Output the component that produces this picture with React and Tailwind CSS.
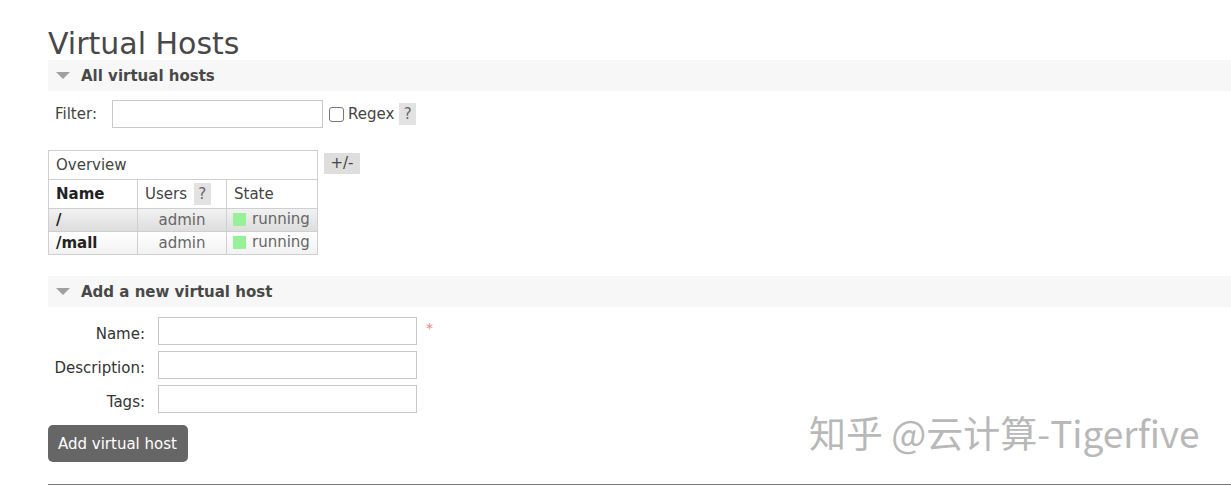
import React from 'react'

const font = { fontFamily: '"DejaVu Sans", Verdana, sans-serif' }

const SectionBar = ({ title }) => (
    <div className="h-[31px] bg-[#f7f7f7] flex items-center">
        <span className="ml-[8px] w-0 h-0 border-l-[7px] border-r-[7px] border-t-[7px] border-l-transparent border-r-transparent border-t-[#a0a0a0]"></span>
        <span className="ml-[11px] mt-[1px] text-[15px] font-bold text-[#484848]">{title}</span>
    </div>
)

const Help = ({ className }) => (
    <span className={`inline-flex items-center justify-center bg-[#e2e2e2] text-[#666] text-[15px] ${className}`}>?</span>
)

const rows = [
    { name: '/', bg: 'bg-gradient-to-b from-[#f2f2f2] to-[#dcdcdc]' },
    { name: '/mall', bg: 'bg-gradient-to-b from-[#ffffff] to-[#f1f1f1]' },
]

const App = () => {
    return (
        <div className="relative w-[1231px] h-[487px] bg-white overflow-hidden text-[#444]" style={font}>
            <div className="pl-[48px] pt-[28px]">
                <h1 className="text-[30px] leading-[32px] text-[#484848]">Virtual Hosts</h1>

                <SectionBar title="All virtual hosts" />

                {/* filter */}
                <div className="mt-[9px] flex items-center h-[28px] text-[15px]">
                    <span className="ml-[7px] w-[57px]">Filter:</span>
                    <div className="w-[211px] h-[28px] border border-[#c8c8c8]"></div>
                    <span className="ml-[6px] w-[15px] h-[15px] border border-[#777] rounded-[3px]"></span>
                    <span className="ml-[4px]">Regex</span>
                    <Help className="ml-[5px] w-[17px] h-[22px]" />
                </div>

                {/* overview table */}
                <div className="mt-[22px] flex items-start">
                    <table className="border-collapse text-[15px] w-[270px]">
                        <tbody>
                            <tr className="h-[29px]">
                                <td colSpan={3} className="border border-[#cfcfcf] px-[7px]">Overview</td>
                            </tr>
                            <tr className="h-[29px]">
                                <td className="border border-[#cfcfcf] px-[7px] w-[89px] font-bold text-[#222]">Name</td>
                                <td className="border border-[#cfcfcf] px-[7px] w-[89px]">
                                    Users <Help className="ml-[2px] w-[17px] h-[22px] align-middle" />
                                </td>
                                <td className="border border-[#cfcfcf] px-[7px]">State</td>
                            </tr>
                            {rows.map((r, i) => (
                                <tr key={i} className={`h-[23px] ${r.bg}`}>
                                    <td className="border border-[#cfcfcf] px-[7px] py-0 font-bold text-[#222] leading-[20px]">{r.name}</td>
                                    <td className="border border-[#cfcfcf] py-0 text-center text-[#666] leading-[20px]">admin</td>
                                    <td className="border border-[#cfcfcf] px-[6px] py-0 text-[#666] leading-[20px]">
                                        <span className="inline-flex items-center">
                                            <span className="w-[13px] h-[13px] bg-[#98f098] mr-[6px]"></span>running
                                        </span>
                                    </td>
                                </tr>
                            ))}
                        </tbody>
                    </table>
                    <span className="ml-[6px] mt-[3px] h-[21px] w-[36px] bg-[#dedede] text-[15px] flex items-center justify-center">+/-</span>
                </div>

                <div className="mt-[21px]">
                    <SectionBar title="Add a new virtual host" />
                </div>

                {/* form */}
                <div className="mt-[10px] flex flex-col gap-[6px] text-[15px]">
                    {['Name:', 'Description:', 'Tags:'].map((label, i) => (
                        <div key={i} className="flex items-center h-[28px]">
                            <span className="w-[97px] mt-[7px] text-right text-[#333]">{label}</span>
                            <div className="ml-[13px] w-[259px] h-[28px] border border-[#c8c8c8]"></div>
                            {i === 0 && <span className="ml-[9px] -mt-[6px] text-[#e08a8a] text-[14px]">*</span>}
                        </div>
                    ))}
                </div>

                <button className="mt-[12px] w-[140px] h-[37px] bg-[#666] rounded-[5px] text-white text-[15px] text-left pl-[10px] pt-[2px]">
                    Add virtual host
                </button>

                <div className="mt-[22px] h-px bg-[#777]"></div>
            </div>

            {/* watermark */}
            <div
                className="absolute left-[809px] top-[405px] text-[37px] text-[#b8b8b8] whitespace-nowrap"
                style={{ fontFamily: '"Noto Sans CJK SC", "DejaVu Sans", sans-serif' }}
            >
                知乎 @云计算-Tigerfive
            </div>
        </div>
    )
}

export default App
